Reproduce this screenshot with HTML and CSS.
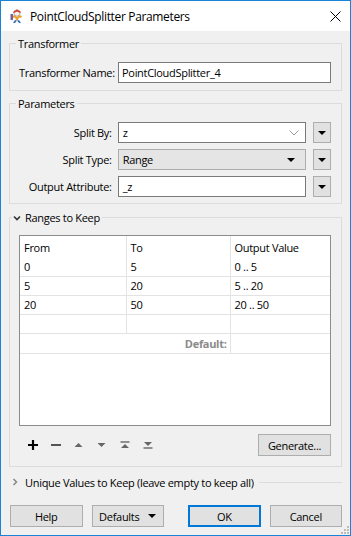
FILE: index.html
```html
<!DOCTYPE html>
<html lang="en">
  <head>
    <meta charset="UTF-8" />
    <meta name="viewport" content="width=device-width, initial-scale=1.0" />
    <title>PointCloudSplitter Parameters</title>
    <link rel="stylesheet" href="styles.css">
  </head>
  <body>
    <div class="window">
      <div class="titlebar">
        <svg class="app-icon" width="16" height="16" viewBox="0 0 16 16">
          <circle cx="8" cy="5" r="3.2" fill="#f4f4f4" stroke="#9a9a9a" stroke-width="0.8" />
          <path d="M4 4 L8 1.6 L12 4 L11 5 L8 3.4 L5 5 Z" fill="#d63a2a" />
          <path d="M3 8 L6 7 L8 9 L10 7 L13 8 L12 10 L10 9.5 L9 12 L7 12 L6 9.5 L4 10 Z" fill="#e8a230" />
          <path d="M6 12 L4 15 L6 15 L8 12.5 Z" fill="#3c6fb4" />
          <path d="M10 12 L12 15 L10 15 L8 12.5 Z" fill="#3c6fb4" />
          <rect x="1.5" y="6" width="2.5" height="6" fill="#7b5ea0" />
        </svg>
        <span class="title">PointCloudSplitter Parameters</span>
        <svg class="close" width="11" height="11" viewBox="0 0 11 11">
          <path d="M0.5 0.5 L10.5 10.5 M10.5 0.5 L0.5 10.5" stroke="#000" stroke-width="1" />
        </svg>
      </div>

      <div class="content">
        <!-- Transformer -->
        <div class="group first">
          <div class="group-title"><span class="caption">Transformer</span></div>
          <div class="group-body transformer-body">
            <div class="row">
              <label class="label left">Transformer Name:</label>
              <div class="textbox wide">PointCloudSplitter_4</div>
            </div>
          </div>
        </div>

        <!-- Parameters -->
        <div class="group">
          <div class="group-title"><span class="caption">Parameters</span></div>
          <div class="group-body params-body">
            <div class="row">
              <label class="label">Split By:</label>
              <div class="textbox combo">
                <span>z</span>
                <svg width="10" height="6" viewBox="0 0 10 6"><polyline points="0.5,0.5 5,5 9.5,0.5" fill="none" stroke="#9a9a9a" stroke-width="1" /></svg>
              </div>
              <button class="menu-btn"><span class="tri"></span></button>
            </div>
            <div class="row">
              <label class="label">Split Type:</label>
              <div class="textbox combo readonly">
                <span>Range</span>
                <span class="tri"></span>
              </div>
              <button class="menu-btn"><span class="tri"></span></button>
            </div>
            <div class="row">
              <label class="label">Output Attribute:</label>
              <div class="textbox combo">_z</div>
              <button class="menu-btn"><span class="tri"></span></button>
            </div>
          </div>
        </div>

        <!-- Ranges to Keep -->
        <div class="group ranges">
          <div class="group-title">
            <span class="caption">
              <svg class="chev" width="8" height="6" viewBox="0 0 8 6"><polyline points="1,1.5 4,4.5 7,1.5" fill="none" stroke="#333" stroke-width="1.6" /></svg>
              Ranges to Keep
            </span>
          </div>
          <div class="group-body ranges-body">
            <div class="table-box">
              <table class="grid">
                <tr class="head">
                  <td class="c1">From</td>
                  <td class="c2">To</td>
                  <td>Output Value</td>
                </tr>
                <tr><td>0</td><td>5</td><td>0 .. 5</td></tr>
                <tr><td>5</td><td>20</td><td>5 .. 20</td></tr>
                <tr><td>20</td><td>50</td><td>20 .. 50</td></tr>
                <tr><td></td><td></td><td></td></tr>
                <tr class="default-row"><td colspan="2" class="default">Default:</td><td></td></tr>
              </table>
            </div>
            <div class="toolbar">
              <span class="tool">
                <svg width="12" height="12" viewBox="0 0 12 12"><path d="M6 1 V11 M1 6 H11" stroke="#000" stroke-width="2.2" /></svg>
              </span>
              <span class="tool">
                <svg width="12" height="12" viewBox="0 0 12 12"><path d="M1 6 H11" stroke="#555" stroke-width="2" /></svg>
              </span>
              <span class="tool">
                <svg width="9" height="6" viewBox="0 0 9 6"><polygon points="0.5,5 4.5,1 8.5,5" fill="#666" /></svg>
              </span>
              <span class="tool">
                <svg width="9" height="6" viewBox="0 0 9 6"><polygon points="0.5,1 4.5,5 8.5,1" fill="#666" /></svg>
              </span>
              <span class="tool">
                <svg width="10" height="8" viewBox="0 0 10 8"><path d="M0.5 1 H9.5" stroke="#666" stroke-width="1.4" /><polygon points="1,7 5,3 9,7" fill="#666" /></svg>
              </span>
              <span class="tool">
                <svg width="10" height="8" viewBox="0 0 10 8"><polygon points="1,1 5,5 9,1" fill="#666" /><path d="M0.5 7 H9.5" stroke="#666" stroke-width="1.4" /></svg>
              </span>
              <button class="btn generate">Generate...</button>
            </div>
          </div>
        </div>

        <!-- Unique Values -->
        <div class="collapsed">
          <svg class="chev" width="6" height="8" viewBox="0 0 6 8"><polyline points="1.5,1 4.5,4 1.5,7" fill="none" stroke="#888" stroke-width="1.5" /></svg>
          <span class="caption">Unique Values to Keep (leave empty to keep all)</span>
          <span class="rule"></span>
        </div>

        <div class="buttons">
          <button class="btn">Help</button>
          <button class="btn defaults">Defaults <span class="tri"></span></button>
          <button class="btn ok">OK</button>
          <button class="btn">Cancel</button>
        </div>
      </div>

      <svg class="grip" width="9" height="9" viewBox="0 0 9 9">
        <rect x="7" y="1" width="2" height="2" fill="#bcbcbc" />
        <rect x="4" y="4" width="2" height="2" fill="#bcbcbc" />
        <rect x="7" y="4" width="2" height="2" fill="#bcbcbc" />
        <rect x="1" y="7" width="2" height="2" fill="#bcbcbc" />
        <rect x="4" y="7" width="2" height="2" fill="#bcbcbc" />
        <rect x="7" y="7" width="2" height="2" fill="#bcbcbc" />
      </svg>
    </div>
  </body>
</html>
```

FILE: styles.css
```css
* {
  margin: 0;
  padding: 0;
  box-sizing: border-box;
}
body {
  width: 351px;
  height: 536px;
  font-family: "Open Sans", "Noto Sans", sans-serif;
  font-size: 11px;
  letter-spacing: -0.3px;
  color: #000;
  background: #f0f0f0;
}
.window {
  position: relative;
  width: 351px;
  height: 536px;
  border: 1px solid #1883d7;
  background: #f0f0f0;
  display: flex;
  flex-direction: column;
}

/* title bar */
.titlebar {
  height: 30px;
  background: #fff;
  display: flex;
  align-items: center;
  padding-left: 8px;
}
.app-icon {
  margin-right: 5px;
}
.title {
  font-size: 12px;
  letter-spacing: -0.35px;
  flex: 1;
}
.close {
  margin-right: 9px;
}

.content {
  padding: 0 8px;
  display: flex;
  flex-direction: column;
}

/* group boxes */
.group {
  margin-top: 5px;
}
.group.ranges {
  margin-top: 6px;
}
.group-title {
  display: flex;
  height: 16px;
  line-height: 16px;
}
.group-title::before {
  content: "";
  align-self: flex-end;
  width: 6px;
  height: 8px;
  border-top: 1px solid #dcdcdc;
  border-left: 1px solid #dcdcdc;
}
.group-title::after {
  content: "";
  align-self: flex-end;
  flex: 1;
  height: 8px;
  border-top: 1px solid #dcdcdc;
  border-right: 1px solid #dcdcdc;
}
.caption {
  padding: 0 2px;
  white-space: nowrap;
}
.ranges .group-title::before {
  width: 2px;
}
.ranges .caption {
  padding-left: 1px;
  display: flex;
  align-items: center;
}
.chev {
  margin-right: 4px;
}
.group-body {
  border: 1px solid #dcdcdc;
  border-top: none;
  padding: 0 10px 0 9px;
}
.transformer-body {
  padding-top: 10px;
  padding-bottom: 7px;
}
.params-body {
  padding-top: 10px;
  padding-bottom: 6px;
  display: flex;
  flex-direction: column;
  gap: 6px;
}
.ranges-body {
  padding-top: 9px;
  padding-bottom: 10px;
}

/* form rows */
.row {
  display: flex;
  align-items: center;
  height: 21px;
}
.label {
  width: 93px;
  margin-right: 6px;
  text-align: right;
  white-space: nowrap;
}
.label.left {
  text-align: left;
}
.textbox {
  height: 21px;
  background: #fff;
  border: 1px solid #7a7a7a;
  padding: 0 4px;
  display: flex;
  align-items: center;
}
.textbox.wide {
  flex: 1;
  padding-left: 3px;
}
.textbox.combo {
  width: 189px;
  justify-content: space-between;
  padding-right: 6px;
}
.textbox.readonly {
  background: #e5e5e5;
  border-color: #adadad;
  padding-right: 10px;
}
.tri {
  display: inline-block;
  width: 0;
  height: 0;
  border-left: 4px solid transparent;
  border-right: 4px solid transparent;
  border-top: 4px solid #000;
}
.menu-btn {
  margin-left: 7px;
  width: 18px;
  height: 21px;
  background: #e1e1e1;
  border: 1px solid #adadad;
  display: flex;
  align-items: center;
  justify-content: center;
}

/* table */
.table-box {
  height: 191px;
  background: #fff;
  border: 1px solid #8c8c8c;
}
.grid {
  width: 100%;
  border-collapse: collapse;
  font-size: 11px;
}
.grid td {
  height: 19px;
  padding: 0 4px;
  border: 1px solid #e3e3e3;
  border-top: none;
  white-space: nowrap;
}
.grid td:first-child {
  border-left: none;
}
.grid td:last-child {
  border-right: none;
}
.grid .c1 {
  width: 106px;
}
.grid .c2 {
  width: 104px;
}
.grid .head td {
  height: 21px;
  border-bottom: none;
  padding-top: 2px;
}
.grid .default {
  text-align: right;
  font-weight: bold;
  color: #8a8a8a;
  padding-right: 3px;
}
.grid .default-row td {
  height: 20px;
}

/* toolbar */
.toolbar {
  display: flex;
  align-items: center;
  margin-top: 8px;
  height: 22px;
  padding-left: 2px;
}
.tool {
  width: 23px;
  height: 22px;
  display: flex;
  align-items: center;
  justify-content: center;
}
.btn {
  height: 22px;
  width: 73px;
  background: #e1e1e1;
  border: 1px solid #adadad;
  font-family: "Open Sans", "Noto Sans", sans-serif;
  font-size: 11px;
  letter-spacing: -0.3px;
  color: #000;
}
.generate {
  margin-left: auto;
}

/* collapsed section */
.collapsed {
  margin-top: 7px;
  height: 16px;
  display: flex;
  align-items: center;
  padding-left: 3px;
}
.collapsed .chev {
  margin-right: 5px;
}
.collapsed .rule {
  flex: 1;
  border-top: 1px solid #dcdcdc;
  margin-left: 3px;
}

/* dialog buttons */
.buttons {
  margin-top: 15px;
  display: flex;
  padding-left: 1px;
}
.buttons .btn {
  margin-right: 9px;
}
.defaults {
  display: flex;
  align-items: center;
  justify-content: center;
  gap: 9px;
}
.ok {
  margin-left: 15px;
  border: 2px solid #0078d7;
}
.buttons .btn:last-child {
  margin-right: 0;
}
.grip {
  position: absolute;
  right: 1px;
  bottom: 1px;
}
```
